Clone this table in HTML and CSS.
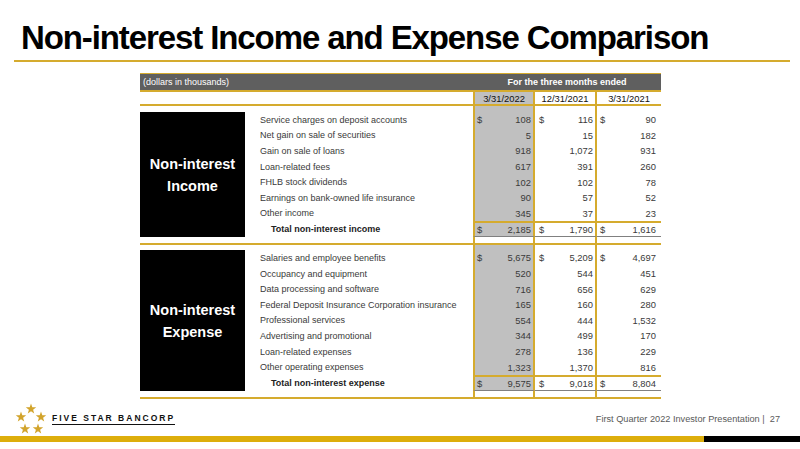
FILE: index.html
```html
<!DOCTYPE html>
<html>
<head>
<meta charset="utf-8">
<link rel="stylesheet" href="styles.css">
</head>
<body>
<div class="slide">
  <h1 class="title">Non-interest Income and Expense Comparison</h1>
  <div class="rule"></div>

  <div class="tbl">
    <div class="thead">
      <div class="th-left">(dollars in thousands)</div>
      <div class="th-right">For the three months ended</div>
    </div>
    <div class="dates">
      <div></div>
      <div class="d c1">3/31/2022</div>
      <div class="d c2">12/31/2021</div>
      <div class="d c3">3/31/2021</div>
    </div>

    <div class="sec sec-inc">
      <div class="box box-inc"><span>Non-interest</span><span>Income</span></div>
      <div></div><div></div><div class="c1"></div><div class="c2"></div><div class="c3"></div>

      <div class="lbl">Service charges on deposit accounts</div>
      <div class="v c1"><span class="cur">$</span>108</div><div class="v c2"><span class="cur">$</span>116</div><div class="v c3"><span class="cur">$</span>90</div>
      <div class="lbl">Net gain on sale of securities</div>
      <div class="v c1">5</div><div class="v c2">15</div><div class="v c3">182</div>
      <div class="lbl">Gain on sale of loans</div>
      <div class="v c1">918</div><div class="v c2">1,072</div><div class="v c3">931</div>
      <div class="lbl">Loan-related fees</div>
      <div class="v c1">617</div><div class="v c2">391</div><div class="v c3">260</div>
      <div class="lbl">FHLB stock dividends</div>
      <div class="v c1">102</div><div class="v c2">102</div><div class="v c3">78</div>
      <div class="lbl">Earnings on bank-owned life insurance</div>
      <div class="v c1">90</div><div class="v c2">57</div><div class="v c3">52</div>
      <div class="lbl">Other income</div>
      <div class="v c1">345</div><div class="v c2">37</div><div class="v c3">23</div>
      <div class="lbl tot-lbl">Total non-interest income</div>
      <div class="v c1 tot"><span class="cur">$</span>2,185</div><div class="v c2 tot"><span class="cur">$</span>1,790</div><div class="v c3 tot"><span class="cur">$</span>1,616</div>

      <div></div><div></div><div class="c1 gap"></div><div class="c2"></div><div class="c3"></div>
    </div>

    <div class="sec sec-exp">
      <div class="box box-exp"><span>Non-interest</span><span>Expense</span></div>
      <div></div><div></div><div class="c1"></div><div class="c2"></div><div class="c3"></div>

      <div class="lbl">Salaries and employee benefits</div>
      <div class="v c1"><span class="cur">$</span>5,675</div><div class="v c2"><span class="cur">$</span>5,209</div><div class="v c3"><span class="cur">$</span>4,697</div>
      <div class="lbl">Occupancy and equipment</div>
      <div class="v c1">520</div><div class="v c2">544</div><div class="v c3">451</div>
      <div class="lbl">Data processing and software</div>
      <div class="v c1">716</div><div class="v c2">656</div><div class="v c3">629</div>
      <div class="lbl">Federal Deposit Insurance Corporation insurance</div>
      <div class="v c1">165</div><div class="v c2">160</div><div class="v c3">280</div>
      <div class="lbl">Professional services</div>
      <div class="v c1">554</div><div class="v c2">444</div><div class="v c3">1,532</div>
      <div class="lbl">Advertising and promotional</div>
      <div class="v c1">344</div><div class="v c2">499</div><div class="v c3">170</div>
      <div class="lbl">Loan-related expenses</div>
      <div class="v c1">278</div><div class="v c2">136</div><div class="v c3">229</div>
      <div class="lbl">Other operating expenses</div>
      <div class="v c1">1,323</div><div class="v c2">1,370</div><div class="v c3">816</div>
      <div class="lbl tot-lbl">Total non-interest expense</div>
      <div class="v c1 tot"><span class="cur">$</span>9,575</div><div class="v c2 tot"><span class="cur">$</span>9,018</div><div class="v c3 tot"><span class="cur">$</span>8,804</div>

      <div></div><div></div><div class="c1 gap"></div><div class="c2"></div><div class="c3"></div>
    </div>
  </div>

  <div class="foot">
    <div class="logo">
      <svg class="stars" width="36" height="34" viewBox="0 0 36 34">
        <defs>
          <path id="st" d="M0,-5.5 L1.29,-1.78 L5.23,-1.7 L2.09,0.68 L3.23,4.45 L0,2.2 L-3.23,4.45 L-2.09,0.68 L-5.23,-1.7 L-1.29,-1.78 Z"/>
        </defs>
        <g fill="#D2A42C">
          <use href="#st" x="18" y="7"/>
          <use href="#st" x="8" y="15"/>
          <use href="#st" x="28" y="15"/>
          <use href="#st" x="12" y="27"/>
          <use href="#st" x="25" y="27"/>
        </g>
      </svg>
      <span class="brand">FIVE STAR BANCORP</span>
    </div>
    <div class="page">First Quarter 2022 Investor Presentation |&nbsp; 27</div>
  </div>
  <div class="bar"><div class="bar-gold"></div><div class="bar-black"></div></div>
</div>
</body>
</html>
```

FILE: styles.css
```css
* { box-sizing: border-box; }
html, body { margin: 0; padding: 0; background: #fff; }
.slide {
  width: 800px;
  height: 449px;
  overflow: hidden;
  display: flex;
  flex-direction: column;
  font-family: "Liberation Sans", Arial, sans-serif;
}
.title {
  margin: 0;
  height: 60px;
  padding: 21px 0 0 21px;
  font-family: "Liberation Sans", Arial, sans-serif;
  font-weight: bold;
  font-size: 33px;
  line-height: 33px;
  letter-spacing: -1.1px;
  color: #000;
  white-space: nowrap;
  flex: none;
}
.rule {
  height: 2px;
  margin: 0 10px 0 14px;
  background: #D5AB2E;
  flex: none;
}
.tbl {
  width: 521px;
  margin: 11px 0 0 140px;
  flex: none;
  font-size: 9px;
  color: #3a3a3a;
}
.thead {
  display: grid;
  grid-template-columns: 333px 188px;
  height: 19px;
  background: #5F5F5F;
  border-top: 1px solid #D5AB2E;
  border-bottom: 2px solid #D5AB2E;
  color: #fff;
  align-items: center;
}
.th-left { padding-left: 3px; }
.th-right { text-align: center; font-weight: bold; }
.dates {
  display: grid;
  grid-template-columns: 333px 62px 62px 64px;
  height: 14px;
  border-bottom: 2px solid #D5AB2E;
}
.d {
  display: flex;
  align-items: center;
  justify-content: center;
  font-size: 9.4px;
  color: #111;
}
.c1 {
  background: #C0C0C0;
  border-left: 2px solid #D5AB2E;
  border-right: 2px solid #D5AB2E;
}
.c2 { border-right: 2px solid #D5AB2E; }
.sec {
  display: grid;
  grid-template-columns: 105px 228px 62px 62px 64px;
  border-bottom: 2px solid #D5AB2E;
}
.sec-inc { grid-template-rows: 6px repeat(7, 15.6px) 16px 6px; }
.sec-exp { grid-template-rows: 5px repeat(8, 15.6px) 16px 6px; }
.box {
  grid-column: 1;
  background: #000;
  color: #fff;
  display: flex;
  flex-direction: column;
  align-items: center;
  justify-content: center;
  font-size: 14.5px;
  font-weight: bold;
  line-height: 22px;
}
.box-inc { grid-row: 2 / span 8; }
.box-exp { grid-row: 2 / span 9; }
.lbl {
  grid-column: 2;
  display: flex;
  align-items: center;
  padding-left: 15px;
  white-space: nowrap;
}
.tot-lbl { padding-left: 26px; font-weight: bold; color: #222; }
.v {
  display: flex;
  align-items: center;
  justify-content: flex-end;
  font-size: 9.4px;
}
.v.c1 { padding: 0 2px 0 2px; }
.v.c2 { padding: 0 2px 0 4px; }
.v.c3 { padding: 0 5px 0 3px; }
.cur { margin-right: auto; }
.tot {
  border-top: 2px solid #D5AB2E;
  border-bottom: 1px solid #808080;
}
.gap { background: #fff; }
.foot {
  height: 37px;
  flex: none;
  display: flex;
  align-items: center;
  justify-content: space-between;
  padding: 4px 20px 0 13px;
}
.logo { display: flex; align-items: center; gap: 3px; }
.stars { display: block; }
.brand {
  font-weight: bold;
  font-size: 8.5px;
  letter-spacing: 2px;
  color: #111;
  border-bottom: 1px solid #111;
  padding-bottom: 1px;
  line-height: 9px;
}
.page {
  font-size: 9.2px;
  color: #595959;
}
.bar { height: 6px; display: flex; flex: none; }
.bar-gold { width: 704px; background: #DDAE0C; }
.bar-black { flex: 1; background: #000; }
```
